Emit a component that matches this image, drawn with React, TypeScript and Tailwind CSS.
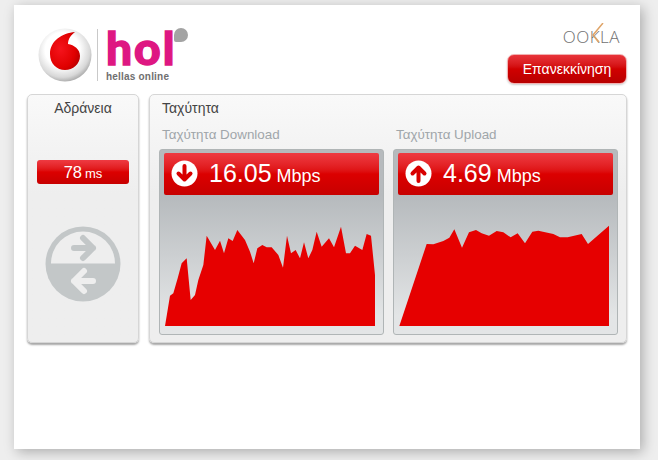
const downloadPoints =
  "30,333 45,242 55,235 68,190 80,145 95,130 107,255 120,240 130,195 145,150 155,62 180,105 195,77 207,115 220,70 233,78 247,45 270,75 285,110 296,145 307,100 322,90 335,97 350,97 370,120 384,158 396,62 408,115 422,105 435,130 447,82 460,130 472,105 485,50 500,95 522,70 537,97 558,35 573,115 585,115 600,92 622,105 635,57 648,62 660,180 660,333";
const uploadPoints =
  "28,333 110,87 130,88 160,78 178,68 193,43 216,98 237,52 258,45 275,55 297,62 320,48 340,52 362,67 383,55 405,85 427,50 445,47 490,57 510,67 533,67 575,57 594,87 657,32 657,333";

function VodafoneLogo() {
  return (
    <svg width="54" height="54" viewBox="0 0 54 54" className="shrink-0">
      <defs>
        <radialGradient id="silver" cx="0.45" cy="0.4" r="0.65">
          <stop offset="0.5" stopColor="#ffffff" />
          <stop offset="0.8" stopColor="#d8d8d8" />
          <stop offset="1" stopColor="#989898" />
        </radialGradient>
        <radialGradient id="drop" cx="0.35" cy="0.45" r="0.7">
          <stop offset="0" stopColor="#f5141c" />
          <stop offset="0.7" stopColor="#e00000" />
          <stop offset="1" stopColor="#b80000" />
        </radialGradient>
      </defs>
      <circle cx="27" cy="27" r="26.5" fill="url(#silver)" />
      <path
        d="M37 4C24 5 12 13 12 26c0 10 7 16 15 16 8 0 15-6 15-14 0-7-6-11-12-12 0-5 3-9 7-12z"
        fill="url(#drop)"
      />
    </svg>
  );
}

function Arrow({ up }: { up?: boolean }) {
  return (
    <svg width="27" height="27" viewBox="0 0 27 27" className="shrink-0">
      <circle cx="13.500" cy="13.500" r="13" fill="#ffffff" />
      <path
        d={up ? "M13.500 21V8M7.500 13.500l6-6 6 6" : "M13.500 6v13M7.500 13.500l6 6 6-6"}
        fill="none"
        stroke="#d80000"
        strokeWidth="4"
        strokeLinecap="round"
        strokeLinejoin="round"
      />
    </svg>
  );
}

function PingIcon() {
  return (
    <svg width="76" height="76" viewBox="0 0 76 76">
      <circle cx="38" cy="38" r="37.500" fill="#c3c7c8" />
      <path d="M6 37.500a32 32 0 0 1 64 0z" fill="#eeeeee" />
      <path
        d="M29 22h19M38 12l10 10-10 10"
        fill="none"
        stroke="#c3c7c8"
        strokeWidth="6"
        strokeLinecap="round"
        strokeLinejoin="round"
      />
      <path
        d="M48 55H29M39 45L29 55l10 10"
        fill="none"
        stroke="#eeeeee"
        strokeWidth="6"
        strokeLinecap="round"
        strokeLinejoin="round"
      />
    </svg>
  );
}

function Gauge({
  label,
  value,
  up,
  points,
  viewBox,
}: {
  label: string;
  value: string;
  up?: boolean;
  points: string;
  viewBox: string;
}) {
  return (
    <div className="w-[225px]">
      <div className="h-[17px] pl-[3px] text-[13.4px] leading-[17px] text-[#a0a6aa]">{label}</div>
      <div className="mt-[6px] h-[186px] rounded-[3px] border border-[#b0b5b6] bg-gradient-to-b from-[#b6babd] from-25% to-[#e3e5e6] to-90% px-[4px] pt-[3px]">
        <div className="flex h-[42px] w-[215px] items-center gap-[11px] rounded-[2px] bg-gradient-to-b from-[#ee3a42] via-[#dc0000] via-50% to-[#c70000] pb-[1px] pl-[7px] text-white">
          <Arrow up={up} />
          <div className="flex items-baseline gap-[5px]">
            <span className="text-[25px] leading-none">{value}</span>
            <span className="text-[18px] leading-none">Mbps</span>
          </div>
        </div>
        <svg width="215" height="135" viewBox={viewBox} className="block">
          <polygon points={points} fill="#e60000" />
        </svg>
      </div>
    </div>
  );
}

export default function App() {
  return (
    <div className="h-[460px] w-[658px] overflow-hidden bg-[#eeeeee] pl-[14px] pt-[5px] font-['Liberation_Sans',Arial,sans-serif]">
      <div className="h-[444px] w-[626px] bg-white shadow-[3px_3px_12px_rgba(0,0,0,0.28)]">
        {/* Header */}
        <header className="flex h-[89px] justify-between pl-[24px] pr-[13px] pt-[23px]">
          <div className="flex items-start">
            <VodafoneLogo />
            <div className="ml-[5px] mt-[1px] h-[52px] w-px bg-[#c9c9c9]" />
            <div className="relative ml-[8px] w-[84px]">
              <div className="h-[41px] pt-[1px] text-[46px] font-black leading-[38px] tracking-[2px] text-[#de1782] [-webkit-text-stroke:1.5px_#de1782] font-['Lato',sans-serif]">
                hol
              </div>
              <span className="absolute left-[68px] top-0 h-[14px] w-[14px] rounded-[50%_50%_50%_2px] bg-[#a3a3a3]" />
              <div className="mt-[3px] text-[10px] font-bold leading-[10px] tracking-[0.2px] text-[#6f6f6f]">
                hellas online
              </div>
            </div>
          </div>
          <div className="flex flex-col items-end">
            <div className="relative mr-[7px] h-[17px] text-[17px] leading-[17px] tracking-[0.5px] text-[#707070] font-['Open_Sans',sans-serif] font-light">
              OOKLA
              <svg width="12" height="19" viewBox="0 0 12 19" className="absolute left-[29px] top-[-5px]">
                <path d="M11 0L1 12l6 7" fill="none" stroke="#dfa468" strokeWidth="1.500" />
              </svg>
            </div>
            <button className="mt-[9px] h-[30px] w-[120px] rounded-[7px] border border-[#f2b0b0] bg-gradient-to-b from-[#e8333a] via-[#d00000] via-50% to-[#b80000] text-[14px] text-white shadow-[0_1px_2px_rgba(0,0,0,0.2)]">
              Επανεκκίνηση
            </button>
          </div>
        </header>

        {/* Panels */}
        <div className="flex gap-[10px] px-[13px]">
          <section className="h-[249px] w-[112px] rounded-[5px] border border-[#d6d6d6] bg-gradient-to-b from-[#f9f9f9] to-[#eeeeee] to-40% shadow-[0_2px_2px_rgba(0,0,0,0.35)]">
            <div className="pt-[5px] text-center text-[14px] leading-[17px] text-[#444444]">Αδράνεια</div>
            <div className="mx-[9px] mt-[43px] flex h-[24px] items-baseline justify-center gap-[3px] rounded-[3px] bg-gradient-to-b from-[#ee3a42] via-[#dc0000] via-50% to-[#c70000] pt-[3px] text-white">
              <span className="text-[16.500px] leading-[18px]">78</span>
              <span className="text-[13px] leading-[18px]">ms</span>
            </div>
            <div className="mt-[42px] flex justify-center">
              <PingIcon />
            </div>
          </section>

          <section className="h-[249px] w-[478px] rounded-[5px] border border-[#d6d6d6] bg-gradient-to-b from-[#f9f9f9] to-[#eeeeee] to-40% px-[9px] shadow-[0_2px_2px_rgba(0,0,0,0.35)]">
            <div className="pl-[3px] pt-[5px] text-[14px] leading-[17px] text-[#444444]">Ταχύτητα</div>
            <div className="mt-[9px] flex gap-[9px]">
              <Gauge label="Ταχύτητα Download" value="16.05" points={downloadPoints} viewBox="27 -60 645 405" />
              <Gauge label="Ταχύτητα Upload" value="4.69" up points={uploadPoints} viewBox="24 -60 645 405" />
            </div>
          </section>
        </div>
      </div>
    </div>
  );
}
